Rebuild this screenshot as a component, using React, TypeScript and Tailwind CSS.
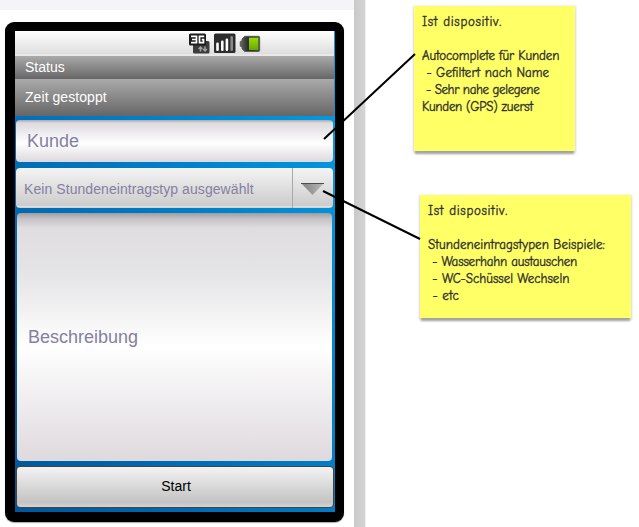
import React from "react";

const noteFont = "font-['Comic_Sans_MS','Comic_Neue',Lato,sans-serif]";

type Line = { text: string; style: string };

function Note({ lines, box }: { lines: Line[]; box: string }) {
  return (
    <div
      className={`absolute bg-[#ffff66] pl-2 pt-[7px] text-[13px] leading-[17px] text-[#2b2b2b] [-webkit-text-stroke:0.35px_#333333] shadow-[0_4px_2px_-1px_#a3a3a3,0_1px_2px_1px_#dedede] ${noteFont} ${box}`}
    >
      {lines.map((l, i) => (
        <div key={i} className={`h-[17px] whitespace-pre ${l.style}`}>
          <span>{l.text}</span>
        </div>
      ))}
    </div>
  );
}

function StatusIcons() {
  return (
    <svg width="74" height="22" viewBox="0 0 74 22" className="ml-[174px] mt-[2px] block">
      <defs>
        <linearGradient id="cell" x1="0" x2="0" y1="0" y2="1">
          <stop offset="0" stopColor="#9bdd00" />
          <stop offset="1" stopColor="#66a800" />
        </linearGradient>
        <linearGradient id="case" x1="0" x2="1" y1="0" y2="0">
          <stop offset="0" stopColor="#666a62" />
          <stop offset=".4" stopColor="#2b2d29" />
          <stop offset="1" stopColor="#4a4d46" />
        </linearGradient>
      </defs>
      <rect x="4" y="8" width="16.5" height="12.5" rx="1.5" fill="#3c3c3c" />
      <rect x="0" y="0.5" width="17" height="12" rx="1.5" fill="#1c1c1c" />
      <path d="M2 3.3h5.5v6.4H2M3 6.5h4.5M15.2 3.3h-4.7v6.4h4V6.6h-1.8" fill="none" stroke="#fff" strokeWidth="1.7" />
      <path d="M11.5 18.5v-4M9.6 16l1.9-1.9 1.9 1.9M16 13.5v4M14.1 16l1.9 1.9 1.9-1.9" fill="none" stroke="#a0a0a0" strokeWidth="1.5" />
      <rect x="25" y="0.5" width="21.5" height="19.5" rx="1.5" fill="#2c2c2c" />
      <g fill="#fff">
        <rect x="27.2" y="9.5" width="2.6" height="8.5" rx="1.2" />
        <rect x="32" y="7.5" width="2.6" height="10.5" rx="1.2" />
        <rect x="36.6" y="5.5" width="2.6" height="12.5" rx="1.2" />
      </g>
      <rect x="41.4" y="3" width="2.6" height="15" rx="1.2" fill="#8a8a8a" />
      <path
        d="M51.2 8.5l1.8-.6V6l2.6-2.7H69.5q1.2 0 1.2 1.2v12.8q0 1.2-1.2 1.2H55.6L53 15.8v-2l-1.8-.6z"
        fill="url(#case)"
        stroke="#4d514a"
        strokeWidth=".8"
      />
      <rect x="60" y="4.7" width="9.3" height="12.3" fill="url(#cell)" />
    </svg>
  );
}

function Phone() {
  return (
    <div className="mt-3 ml-[5px] h-[500px] w-[339px] rounded-[9px] bg-black pt-[9px] pr-[9px] pb-[10px] pl-[10px] shadow-[0_1px_1px_#aaaaaa]">
      <div className="flex h-[481px] w-[320px] flex-col bg-[linear-gradient(60deg,#00569b_0%,#007cc5_55%,#00a0e6_100%)] font-['Liberation_Sans',Arial,sans-serif]">
        <div className="h-[25px] w-[319px] shrink-0 bg-[linear-gradient(#ffffff,#dddddd_92%,#f2f2f2_96%,#e0e0e0)]">
          <StatusIcons />
        </div>
        <div className="h-[23px] w-[319px] shrink-0 bg-[linear-gradient(#aaaaaa,#666666)] pl-[10px] text-[14px] leading-[23px] text-white">
          Status
        </div>
        <div className="h-[37px] w-[319px] shrink-0 bg-[linear-gradient(#aaaaaa,#666666)] pl-[10px] text-[14px] leading-[37px] tracking-[0.06px] text-white">
          Zeit gestoppt
        </div>
        <div className="mt-1 ml-[1px] h-[42px] w-[317px] shrink-0 rounded-[4px] bg-[linear-gradient(#aaa6aa_0,#dedbdf_3px,#e9e7eb_25%,#ffffff_55%,#ddd9dd_100%)] pl-[11px] text-[18px] leading-[42px] text-[#8480a0]">
          Kunde
        </div>
        <div className="mt-[6px] ml-[1px] flex h-[40px] w-[317px] shrink-0 rounded-[4px] bg-[linear-gradient(#f4f4f4,#cccccc_95%,#eeeeee_97%,#bbbbbb)] text-[14px] leading-[42px] text-[#8480a0]">
          <div className="w-[277px] border-r border-[#a8a8a8] pl-2 tracking-[0.07px] whitespace-nowrap">
            Kein Stundeneintragstyp ausgewählt
          </div>
          <svg width="40" height="40" viewBox="0 0 40 40">
            <defs>
              <linearGradient id="arrow" x1="0" x2="1" y1="0" y2="0">
                <stop offset="0" stopColor="#808080" />
                <stop offset="1" stopColor="#b8b8b8" />
              </linearGradient>
            </defs>
            <path d="M8 15h23L19.5 27z" fill="url(#arrow)" />
            <path d="M8 15.5h23" stroke="#4c4c4c" />
          </svg>
        </div>
        <div className="mt-[5px] ml-[2px] h-[248px] w-[315px] shrink-0 rounded-[4px] bg-[linear-gradient(#a09da0_0,#c5c3c6_6px,#dfdde0_15px,#e5e4e6_25%,#ffffff_54%,#ded9dd_100%)] pl-[11px] text-[18px] leading-[248px] text-[#8480a0]">
          Beschreibung
        </div>
        <div className="mt-[5px] ml-[1px] h-[42px] w-[318px] shrink-0 rounded-[4px] border border-[#444444] bg-[linear-gradient(#f3f3f3,#c3c3c3_88%,#d4d4d4)] pl-[2px] text-center text-[14px] leading-[38px] text-black">
          Start
        </div>
      </div>
    </div>
  );
}

export default function App() {
  return (
    <div className="relative flex h-[527px] w-[639px] overflow-hidden bg-white">
      <div className="w-[354px] shrink-0">
        <div className="h-[10px] bg-[#f5f5f8]" />
        <Phone />
      </div>
      <div className="h-full w-[12px] border-r border-[#eeeeee] bg-[linear-gradient(90deg,#c9c9c9,#d4d4d4)]" />
      <Note
        box="left-[414px] top-[6px] h-[145px] w-[161px]"
        lines={[
          { text: "Ist dispositiv.", style: "tracking-[0.66px]" },
          { text: "", style: "" },
          { text: "Autocomplete für Kunden", style: "tracking-[-0.13px]" },
          { text: " - Gefiltert nach Name", style: "tracking-[0.04px]" },
          { text: " - Sehr nahe gelegene", style: "tracking-[-0.4px]" },
          { text: "Kunden (GPS) zuerst", style: "tracking-[-0.28px]" },
        ]}
      />
      <Note
        box="left-[420px] top-[195px] h-[123px] w-[211px]"
        lines={[
          { text: "Ist dispositiv.", style: "tracking-[0.66px]" },
          { text: "", style: "" },
          { text: "Stundeneintragstypen Beispiele:", style: "tracking-[0.06px]" },
          { text: " - Wasserhahn austauschen", style: "tracking-[-0.17px]" },
          { text: " - WC-Schüssel Wechseln", style: "" },
          { text: " - etc", style: "tracking-[0.15px]" },
        ]}
      />
      <svg className="absolute top-0 left-0" width="639" height="527">
        <path d="M324 139L415 54M323 191L420 239" stroke="#000" strokeWidth="2" />
      </svg>
    </div>
  );
}
